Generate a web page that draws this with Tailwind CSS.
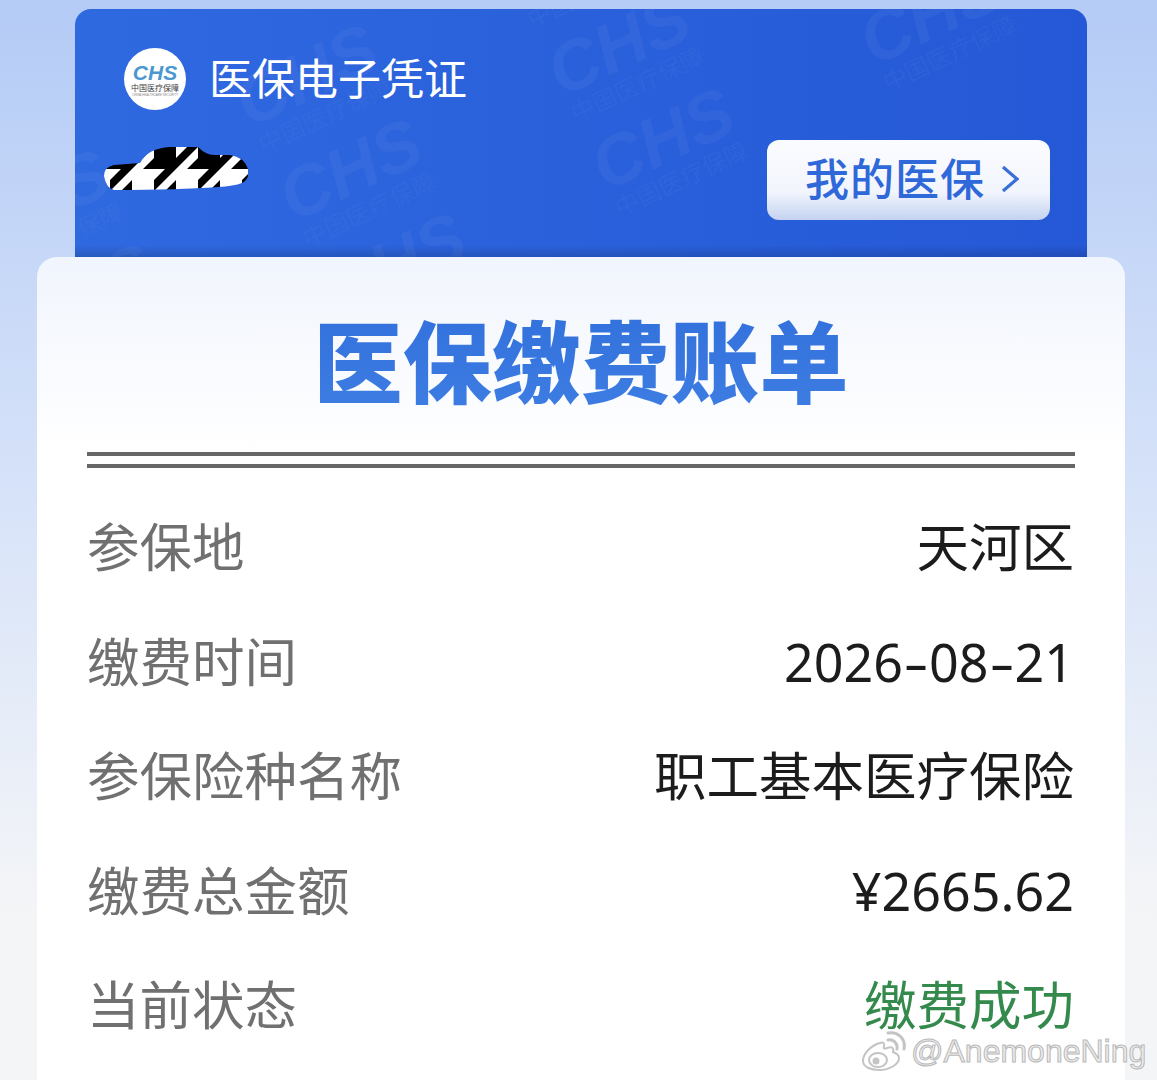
<!DOCTYPE html>
<html lang="zh-CN">
  <head>
    <meta charset="UTF-8" />
    <title>医保缴费账单</title>
    <script src="https://cdn.jsdelivr.net/npm/@tailwindcss/browser@4"></script>
  </head>
  <body class="m-0">
    <div class="relative h-[1080px] w-[1157px] overflow-hidden bg-gradient-to-b from-[#b4cbf6] via-[#dae5f9] via-50% to-[#f4f5f7] to-85% font-['Noto_Sans','Noto_Sans_CJK_SC',sans-serif] pt-[9px]">
      <!-- blue header -->
      <div class="relative mx-[75px] h-[248px] w-[1012px] overflow-hidden rounded-t-[16px] bg-gradient-to-r from-[#2f69e0] to-[#2558d6]">
        <!-- watermark -->
        <div class="absolute -left-[150px] -top-[100px] grid w-[1400px] -rotate-[25deg] grid-cols-5 gap-x-[80px] gap-y-[14px] font-['Liberation_Sans','Noto_Sans_CJK_SC',sans-serif] text-white/[0.045]">
          <div class="flex flex-col items-center"><span class="text-[70px] leading-[60px] font-bold italic">CHS</span><span class="text-[24px] leading-[30px]">中国医疗保障</span></div>
          <div class="flex flex-col items-center"><span class="text-[70px] leading-[60px] font-bold italic">CHS</span><span class="text-[24px] leading-[30px]">中国医疗保障</span></div>
          <div class="flex flex-col items-center"><span class="text-[70px] leading-[60px] font-bold italic">CHS</span><span class="text-[24px] leading-[30px]">中国医疗保障</span></div>
          <div class="flex flex-col items-center"><span class="text-[70px] leading-[60px] font-bold italic">CHS</span><span class="text-[24px] leading-[30px]">中国医疗保障</span></div>
          <div class="flex flex-col items-center"><span class="text-[70px] leading-[60px] font-bold italic">CHS</span><span class="text-[24px] leading-[30px]">中国医疗保障</span></div>
          <div class="flex flex-col items-center"><span class="text-[70px] leading-[60px] font-bold italic">CHS</span><span class="text-[24px] leading-[30px]">中国医疗保障</span></div>
          <div class="flex flex-col items-center"><span class="text-[70px] leading-[60px] font-bold italic">CHS</span><span class="text-[24px] leading-[30px]">中国医疗保障</span></div>
          <div class="flex flex-col items-center"><span class="text-[70px] leading-[60px] font-bold italic">CHS</span><span class="text-[24px] leading-[30px]">中国医疗保障</span></div>
          <div class="flex flex-col items-center"><span class="text-[70px] leading-[60px] font-bold italic">CHS</span><span class="text-[24px] leading-[30px]">中国医疗保障</span></div>
          <div class="flex flex-col items-center"><span class="text-[70px] leading-[60px] font-bold italic">CHS</span><span class="text-[24px] leading-[30px]">中国医疗保障</span></div>
          <div class="flex flex-col items-center"><span class="text-[70px] leading-[60px] font-bold italic">CHS</span><span class="text-[24px] leading-[30px]">中国医疗保障</span></div>
          <div class="flex flex-col items-center"><span class="text-[70px] leading-[60px] font-bold italic">CHS</span><span class="text-[24px] leading-[30px]">中国医疗保障</span></div>
          <div class="flex flex-col items-center"><span class="text-[70px] leading-[60px] font-bold italic">CHS</span><span class="text-[24px] leading-[30px]">中国医疗保障</span></div>
          <div class="flex flex-col items-center"><span class="text-[70px] leading-[60px] font-bold italic">CHS</span><span class="text-[24px] leading-[30px]">中国医疗保障</span></div>
          <div class="flex flex-col items-center"><span class="text-[70px] leading-[60px] font-bold italic">CHS</span><span class="text-[24px] leading-[30px]">中国医疗保障</span></div>
        </div>
        <div class="absolute inset-x-0 bottom-0 h-[12px] bg-gradient-to-b from-transparent to-black/15"></div>

        <div class="relative flex flex-col pl-[27px] pr-[37px] pt-[39px]">
          <div class="flex items-center gap-[23px] pl-[22px]">
            <div class="flex h-[62px] w-[62px] shrink-0 flex-col items-center justify-center rounded-full bg-white pt-[2px]">
              <span class="font-['Liberation_Sans',sans-serif] text-[21px] leading-[18px] font-bold italic text-[#4a98cf]">CHS</span>
              <span class="mt-[1px] text-[8px] leading-[10px] text-[#3b3b3b]">中国医疗保障</span>
              <span class="font-['Liberation_Sans',sans-serif] text-[3px] leading-[4px] whitespace-nowrap text-[#888888]">CHINA HEALTHCARE SECURITY</span>
            </div>
            <div class="text-[43px] leading-[60px] text-white">医保电子凭证</div>
          </div>

          <div class="mt-[30px] flex items-start justify-between">
            <svg class="mt-[6px]" width="146" height="50" viewBox="0 0 146 50">
              <defs>
                <pattern id="tooth" width="44" height="44" patternUnits="userSpaceOnUse" patternTransform="translate(8 1)">
                  <rect width="44" height="44" fill="#ffffff" />
                  <path d="M0 0h22v22h-22zM22 22l22-22h-11l-11 11zM44 11v11h-11zM0 44l22-22h-11l-11 11zM22 33v11h-11z" fill="#000000" />
                </pattern>
              </defs>
              <path d="M2 30q0-9 10-11l26-2q8-15 30-16h28q8 8 16 8h16q14 2 18 14q2 10-6 14q-8 3-24 4q-40 3-104 3q-8-2-10-14z" fill="url(#tooth)" />
            </svg>
            <button class="flex h-[80px] w-[283px] items-center justify-center gap-[16px] rounded-[12px] bg-gradient-to-b from-[#fbfcff] via-[#f2f5fd] via-65% to-[#c4d3f1] pb-[2px] pl-[7px] text-[#2f68d8]">
              <span class="text-[44px] leading-[60px] font-medium tracking-[1px]">我的医保</span>
              <svg width="18" height="30" viewBox="0 0 18 30" fill="none" stroke="#3a6fd8" stroke-width="3.2"><path d="M2 3l14 12l-14 12" /></svg>
            </button>
          </div>
        </div>
      </div>

      <!-- bill card -->
      <div class="mx-[37px] h-[823px] w-[1088px] rounded-t-[20px] bg-gradient-to-b from-[#f1f5fd] to-white to-[24%] px-[50px]">
        <h1 class="bg-gradient-to-b from-[#2d69d9] to-[#3f7fe3] bg-clip-text pt-[41px] text-center text-[89px] leading-[128px] font-black tracking-[0.2px] text-transparent">医保缴费账单</h1>
        <div class="mt-[26px] h-[16px] border-y-[4px] border-[#666666]"></div>
        <dl class="mt-[22px] flex flex-col pr-[1px] text-[52.5px] leading-[114.5px]">
          <div class="flex justify-between"><dt class="text-[#707070]">参保地</dt><dd class="text-[#1c1c1c]">天河区</dd></div>
          <div class="flex justify-between"><dt class="text-[#707070]">缴费时间</dt><dd class="text-[52px] text-[#1c1c1c]">2026<span class="inline-block w-[26px] scale-x-150 text-center">-</span>08<span class="inline-block w-[26px] scale-x-150 text-center">-</span>21</dd></div>
          <div class="flex justify-between"><dt class="text-[#707070]">参保险种名称</dt><dd class="text-[#1c1c1c]">职工基本医疗保险</dd></div>
          <div class="flex justify-between"><dt class="text-[#707070]">缴费总金额</dt><dd class="text-[52px] text-[#1c1c1c]">¥2665.62</dd></div>
          <div class="flex justify-between"><dt class="text-[#707070]">当前状态</dt><dd class="text-[#348a4c]">缴费成功</dd></div>
        </dl>
      </div>

      <!-- weibo watermark -->
      <div class="absolute left-[861px] top-[1030px] flex items-center gap-[4px]">
        <svg width="46" height="42" viewBox="0 0 46 42" fill="none" stroke="#c4c4c4" stroke-width="2">
          <path d="M19 13c-8 2-17 10-17 18c0 6 8 9 16 9c11 0 20-6 20-12c0-4-4-5-6-6c1-3 0-6-6-4c-3 1-4 1-3-2c1-3-1-4-4-3z" fill="#ffffff" />
          <ellipse cx="17" cy="30" rx="9" ry="7" />
          <circle cx="15" cy="31" r="2.5" fill="#c4c4c4" />
          <path d="M27 10c5-1 10 3 9 9M27 3c10-2 18 6 16 16" stroke-width="3" stroke-linecap="round" />
        </svg>
        <span class="font-['Liberation_Sans',sans-serif] text-[32px] leading-[40px] text-[#ececec] [-webkit-text-stroke:1px_#b9b9b9]">@AnemoneNing</span>
      </div>
    </div>
  </body>
</html>
